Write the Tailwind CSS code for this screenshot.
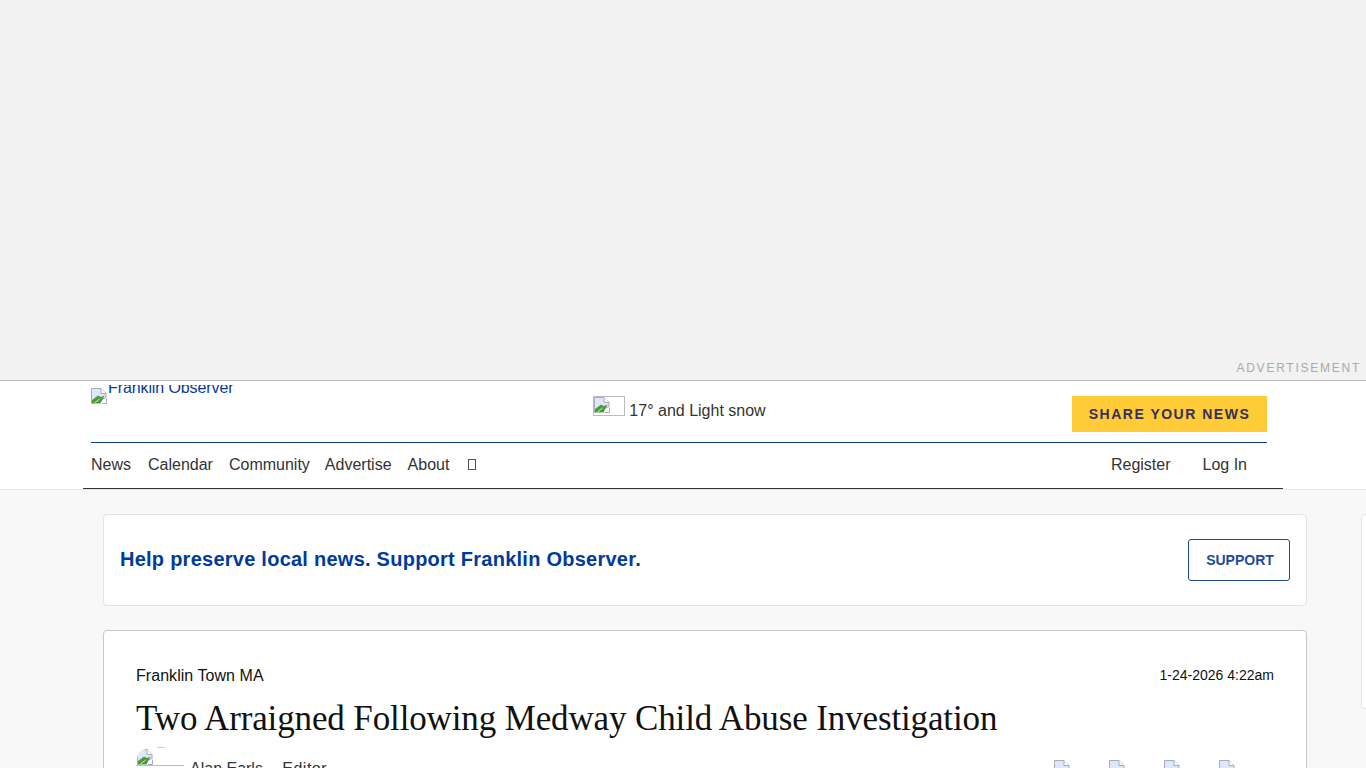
<!DOCTYPE html>
<html lang="en">
<head>
    <meta charset="UTF-8">
    <meta name="viewport" content="width=device-width, initial-scale=1.0">
    <title>Two Arraigned Following Medway Child Abuse Investigation</title>
    <script src="https://cdn.jsdelivr.net/npm/@tailwindcss/browser@4"></script>
</head>
<body class="h-[768px] overflow-hidden bg-[#f8f8f8] font-['Liberation_Sans',Arial,sans-serif] text-[#333]">

    <!-- ad slot -->
    <div class="h-[381px] bg-[#f2f2f2] border-b border-[#bbb] flex items-end justify-end pr-[5px] pb-[5px]">
        <span class="text-xs leading-[14px] tracking-[1.75px] text-[#aaa]">ADVERTISEMENT</span>
    </div>

    <!-- header -->
    <header class="h-[109px] bg-white border-b border-[#e6e6e6]">
        <div class="w-[1200px] h-[108px] ml-[83px] px-2 border-b border-[#333]">
            <div class="h-[62px] w-[1176px] border-b border-[#0b3a82] flex items-start justify-between">
                <a class="flex w-[196px] h-[24px] mt-[4px] overflow-hidden text-[#0b3a9a]">
                    <svg class="w-4 h-4 mt-[3px] shrink-0" viewBox="0 0 16 16"><path d="M.5.5h9.500l5 5v4L.5 15.500z" fill="#dfe7f8" stroke="#a3adbd"/><path d="M10 .5v5h5" fill="#fff" stroke="#a3adbd"/><path d="M1 15.500v-3.500l6-4.500 3 1.500 3.500-1.500-4 8z" fill="#4f9a3a"/><path d="M3.500 15l5-4" stroke="#d5ecc8"/><path d="M11 15.500h4.500v-5" fill="none" stroke="#a3adbd"/></svg>
                    <span class="leading-[14px] -mt-[4px] ml-[1px] tracking-[-.1px] whitespace-nowrap">Franklin Observer</span>
                </a>
                <div class="flex items-start mt-[15px]">
                    <span class="w-8 h-5 border border-[#bbb] block">
                        <svg class="w-4 h-4" viewBox="0 0 16 16"><path d="M.5.5h9.500l5 5v4L.5 15.500z" fill="#dfe7f8" stroke="#a3adbd"/><path d="M10 .5v5h5" fill="#fff" stroke="#a3adbd"/><path d="M1 15.500v-3.500l6-4.500 3 1.500 3.500-1.500-4 8z" fill="#4f9a3a"/><path d="M3.500 15l5-4" stroke="#d5ecc8"/><path d="M11 15.500h4.500v-5" fill="none" stroke="#a3adbd"/></svg>
                    </span>
                    <span class="ml-1 text-base leading-5 mt-[5px]">17° and Light snow</span>
                </div>
                <a class="mt-[15px] w-[195px] h-9 bg-[#ffcb37] text-[#35305f] text-sm font-bold tracking-[1.5px] flex items-center justify-center">SHARE YOUR NEWS</a>
            </div>
            <nav class="w-[1176px] h-[45px] pb-[2px] flex items-center justify-between text-base">
                <div class="flex items-center gap-[16px]">
                    <a>News</a>
                    <a class="ml-[1px]">Calendar</a>
                    <a>Community</a>
                    <a class="-ml-[1px]">Advertise</a>
                    <a>About</a>
                    <span class="w-[8px] h-[11px] border border-[#555] ml-[3px]"></span>
                </div>
                <div class="flex items-center gap-8 pr-5">
                    <a>Register</a>
                    <a>Log In</a>
                </div>
            </nav>
        </div>
    </header>

    <!-- main -->
    <main class="relative pt-6 pl-[103px] w-[1307px]">
        <section class="h-[92px] bg-white border border-[#e4e4e4] rounded flex items-center justify-between pl-[16px] pr-4">
            <p class="text-xl font-bold tracking-[.25px] text-[#003a9c] -mt-[2px]">Help preserve local news. Support Franklin Observer.</p>
            <a class="w-[102px] h-[42px] pl-[2px] border border-[#1f4a8c] rounded-[3px] text-sm font-bold text-[#1f4a9c] flex items-center justify-center">SUPPORT</a>
        </section>

        <article class="mt-6 h-[300px] bg-white border border-[#c8c8c8] rounded px-8 pt-[32px]">
            <div class="flex items-center justify-between text-[#111]">
                <span class="text-base leading-6 tracking-[.05px] mt-[1px]">Franklin Town MA</span>
                <span class="text-sm mb-[2px]">1-24-2026 4:22am</span>
            </div>
            <h1 class="mt-[9px] font-['Liberation_Serif',serif] text-[35px] leading-[44px] tracking-[-.13px] text-[#111]">Two Arraigned Following Medway Child Abuse Investigation</h1>
            <div class="mt-[6px] flex items-start justify-between">
                <div class="flex items-start">
                    <span class="relative w-12 h-[19px] block border-b border-[#bbb]">
                        <span class="absolute left-[21px] top-0 w-2 border-t border-[#ccc]"></span>
                        <svg class="absolute left-[1px] top-[2px] w-4 h-4 rounded-tl-[10px]" viewBox="0 0 16 16"><path d="M.5.5h9.500l5 5v4L.5 15.500z" fill="#dfe7f8" stroke="#a3adbd"/><path d="M10 .5v5h5" fill="#fff" stroke="#a3adbd"/><path d="M1 15.500v-3.500l6-4.500 3 1.500 3.500-1.500-4 8z" fill="#4f9a3a"/><path d="M3.500 15l5-4" stroke="#d5ecc8"/><path d="M11 15.500h4.500v-5" fill="none" stroke="#a3adbd"/></svg>
                    </span>
                    <span class="ml-[6px] text-base leading-5 mt-[12px] flex">
                        <span>Alan Earls</span><span class="mx-[7px]">-</span><span class="tracking-[.5px]">Editor</span>
                    </span>
                </div>
                <div class="flex gap-[39px] mt-[13px] mr-[39px]">
                    <svg class="w-4 h-4" viewBox="0 0 16 16"><path d="M.5.5h9.500l5 5v4L.5 15.500z" fill="#dfe7f8" stroke="#a3adbd"/><path d="M10 .5v5h5" fill="#fff" stroke="#a3adbd"/></svg>
                    <svg class="w-4 h-4" viewBox="0 0 16 16"><path d="M.5.5h9.500l5 5v4L.5 15.500z" fill="#dfe7f8" stroke="#a3adbd"/><path d="M10 .5v5h5" fill="#fff" stroke="#a3adbd"/></svg>
                    <svg class="w-4 h-4" viewBox="0 0 16 16"><path d="M.5.5h9.500l5 5v4L.5 15.500z" fill="#dfe7f8" stroke="#a3adbd"/><path d="M10 .5v5h5" fill="#fff" stroke="#a3adbd"/></svg>
                    <svg class="w-4 h-4" viewBox="0 0 16 16"><path d="M.5.5h9.500l5 5v4L.5 15.500z" fill="#dfe7f8" stroke="#a3adbd"/><path d="M10 .5v5h5" fill="#fff" stroke="#a3adbd"/></svg>
                </div>
            </div>
        </article>
    </main>

    <!-- next sidebar card, cut off by the window -->
    <div class="absolute left-[1361px] top-[514px] w-[20px] h-[195px] bg-white border border-[#e4e4e4] rounded"></div>
</body>
</html>
